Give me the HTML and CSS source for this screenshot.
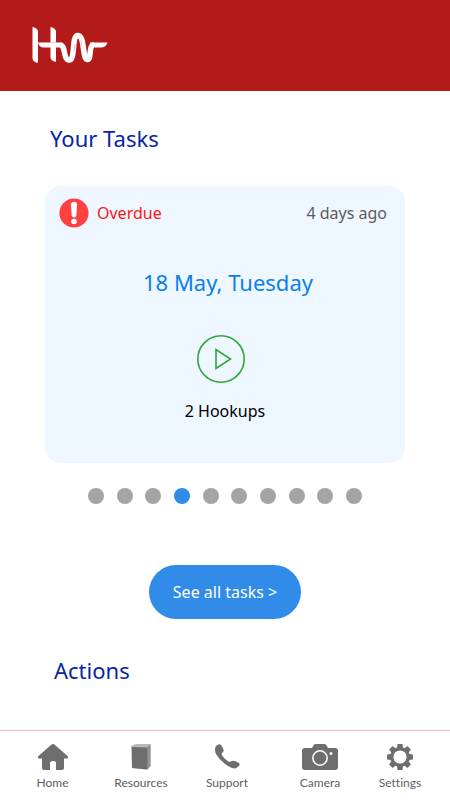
FILE: index.html
```html
<!DOCTYPE html>
<html lang="en">
<head>
<meta charset="utf-8">
<meta name="viewport" content="width=device-width, initial-scale=1">
<title>Your Tasks</title>
<link rel="stylesheet" href="styles.css">
</head>
<body>
<header class="topbar">
  <svg class="logo" viewBox="0 0 76 37" role="img" aria-label="HW">
    <g fill="#fff">
      <path d="M0.500 0Q6 1 6 5V36Q0.500 35 0.500 31Z"/>
      <path d="M18.500 0Q24 1 24 5V35Q18.500 34 18.500 30Z"/>
      <path d="M6 15.500H28L33 20.500H12Q7 20.500 6 15.500Z"/>
      <path d="M58 15.500H75.500Q74 20.500 69 20.500H58Z"/>
    </g>
    <path d="M28 18C34 18 31 33 37 33C44 33 39 8.500 46 8.500C53 8.500 50 32.500 55.500 32.500C60 32.500 56 18 62 18" fill="none" stroke="#fff" stroke-width="5.500"/>
    <path d="M8 15.500H27M43 17L42 24M49 13L50 20" fill="none" stroke="#e3a3a3" stroke-width=".6"/>
  </svg>
</header>
<main class="content">
  <h1 class="heading">Your Tasks</h1>
  <article class="task">
    <div class="task-top">
      <svg class="alert" viewBox="0 0 30 30" aria-hidden="true">
        <circle cx="15" cy="15" r="14.600" fill="#ff4141"/>
        <path d="M15 3.800c2 0 3.100 1.200 3 3L17.400 17c-.1 1.600-1 2.500-2.400 2.500s-2.300-.9-2.400-2.500L12 6.800c-.1-1.800 1-3 3-3Z" fill="#fff"/>
        <circle cx="15" cy="23.500" r="2.800" fill="#fff"/>
      </svg>
      <span class="status">Overdue</span>
      <span class="age">4 days ago</span>
    </div>
    <h2 class="date">18 May, Tuesday</h2>
    <button class="play" type="button" aria-label="Play">
      <svg viewBox="0 0 48 48" fill="none" stroke="#2fa836" aria-hidden="true">
        <circle cx="24" cy="24" r="23.200" stroke-width="1.600"/>
        <path d="M19 14.500V33.500L33.500 24Z" stroke-width="1.600"/>
      </svg>
    </button>
    <p class="count">2 Hookups</p>
  </article>
  <div class="dots">
    <button type="button" aria-label="Task 1"></button>
    <button type="button" aria-label="Task 2"></button>
    <button type="button" aria-label="Task 3"></button>
    <button type="button" aria-label="Task 4" class="active"></button>
    <button type="button" aria-label="Task 5"></button>
    <button type="button" aria-label="Task 6"></button>
    <button type="button" aria-label="Task 7"></button>
    <button type="button" aria-label="Task 8"></button>
    <button type="button" aria-label="Task 9"></button>
    <button type="button" aria-label="Task 10"></button>
  </div>
  <button class="see-all" type="button">See all tasks &gt;</button>
  <h2 class="heading actions">Actions</h2>
</main>
<nav class="tabs">
  <a href="#home">
    <svg width="32" height="28" viewBox="0 0 32 28" fill="#6e6e6e" aria-hidden="true"><path d="M16 1Q17 1 18 2L30.500 13Q32 15 30 15.500H27V25Q27 27 25 27H19V20Q19 18 16 18Q13 18 13 20V27H7Q5 27 5 25V15.500H2Q0 15 1.500 13L14 2Q15 1 16 1Z"/></svg>
    <span>Home</span>
  </a>
  <a href="#resources">
    <svg width="22" height="28" viewBox="0 0 22 28" aria-hidden="true"><path d="M1 3L6 1H20.500V23L17 26.500L2 25Z" fill="#b8b8b8"/><path d="M17.500 4L20.500 1V23L17.500 26.500Z" fill="#929292"/><path d="M2 4L17.500 4.500V26.500L2 25Z" fill="#6e6e6e"/></svg>
    <span>Resources</span>
  </a>
  <a href="#support">
    <svg width="26" height="28" viewBox="0 0 26 28" fill="#6e6e6e" aria-hidden="true"><path d="M2 3Q5 0 7 2Q11 7 9 9L7.500 11Q9 15 15 19L18 18Q20 17 25 20Q27 22 23 24.500Q20 27 14 23Q6 18 2 11Q0 6 2 3Z"/></svg>
    <span>Support</span>
  </a>
  <a href="#camera">
    <svg width="36" height="28" viewBox="0 0 36 28" aria-hidden="true"><path d="M3 5H10L12 1.500Q12.500 1 14 1H22Q23.500 1 24 1.500L26 5H33Q36 5 36 8V24Q36 27 33 27H3Q0 27 0 24V8Q0 5 3 5Z" fill="#6e6e6e"/><circle cx="18" cy="15" r="7.200" fill="none" stroke="#fff" stroke-width="1.500"/><circle cx="29" cy="10.500" r="1.500" fill="#fff"/></svg>
    <span>Camera</span>
  </a>
  <a href="#settings">
    <svg width="28" height="28" viewBox="-14 -14 28 28" aria-hidden="true">
      <circle r="8.300" fill="none" stroke="#6e6e6e" stroke-width="3.400"/>
      <g fill="#6e6e6e">
        <path id="tooth" d="M-3 -9L-2.500 -13H2.500L3 -9Z"/>
        <use href="#tooth" transform="rotate(45)"/><use href="#tooth" transform="rotate(90)"/><use href="#tooth" transform="rotate(135)"/><use href="#tooth" transform="rotate(180)"/><use href="#tooth" transform="rotate(225)"/><use href="#tooth" transform="rotate(270)"/><use href="#tooth" transform="rotate(315)"/>
      </g>
    </svg>
    <span>Settings</span>
  </a>
</nav>
</body>
</html>
```
FILE: styles.css
```css
* {
  box-sizing: border-box;
}

body {
  margin: 0;
  min-height: 100vh;
  display: flex;
  flex-direction: column;
  background: #fff;
  color: #111;
  font-family: "Noto Sans", sans-serif;
  font-size: 16px;
  line-height: 24px;
}

h1,
h2,
p {
  margin: 0;
  font-weight: 400;
}

button {
  border: 0;
  padding: 0;
  font: inherit;
  cursor: pointer;
}

.topbar {
  padding: 27px 32px;
  background: #b31a1a;
}

.logo {
  display: block;
  width: 76px;
  height: 37px;
}

.content {
  flex: 1;
  display: flex;
  flex-direction: column;
  padding: 31px 45px 24px;
}

.heading {
  padding-left: 5px;
  color: #0626a3;
  font-size: 22px;
  line-height: 32px;
}

.task {
  display: flex;
  flex-direction: column;
  align-items: center;
  margin-top: 32px;
  padding: 12px 0 40px;
  border-radius: 16px;
  background: #eef7ff;
}

.task-top {
  align-self: stretch;
  display: flex;
  align-items: center;
  gap: 8px;
  padding: 0 18px 0 14px;
}

.alert {
  width: 30px;
  height: 30px;
}

.status {
  color: #fb1616;
}

.age {
  margin-left: auto;
  color: #5c5c5c;
}

.date {
  margin: 38px 0 0 6px;
  color: #0a80e8;
  font-size: 22px;
  line-height: 32px;
}

.play {
  width: 48px;
  height: 48px;
  margin: 37px 8px 0 0;
  border-radius: 50%;
  background: none;
}

.play svg {
  display: block;
}

.count {
  margin-top: 16px;
  color: #000;
}

.dots {
  display: flex;
  justify-content: space-between;
  margin: 25px 43px 0;
}

.dots button {
  width: 16px;
  height: 16px;
  border-radius: 50%;
  background: #a4a4a4;
}

.dots .active {
  background: #308ce8;
}

.see-all {
  align-self: center;
  margin-top: 61px;
  padding: 15px 24px;
  border-radius: 27px;
  background: #308ce8;
  color: #fff;
}

.actions {
  margin-top: 35px;
  padding-left: 9px;
}

.tabs {
  position: sticky;
  bottom: 0;
  display: grid;
  grid-template-columns: 89fr 88fr 84fr 102fr 58fr;
  padding: 12px 21px 9px 8px;
  border-top: 1px solid #eeb4bb;
  background: #fff;
  font-family: Lato, sans-serif;
  font-size: 12px;
  font-variant-ligatures: none;
  line-height: 16px;
}

.tabs a {
  display: flex;
  flex-direction: column;
  align-items: center;
  gap: 4px;
  color: #606060;
  text-decoration: none;
}
```
